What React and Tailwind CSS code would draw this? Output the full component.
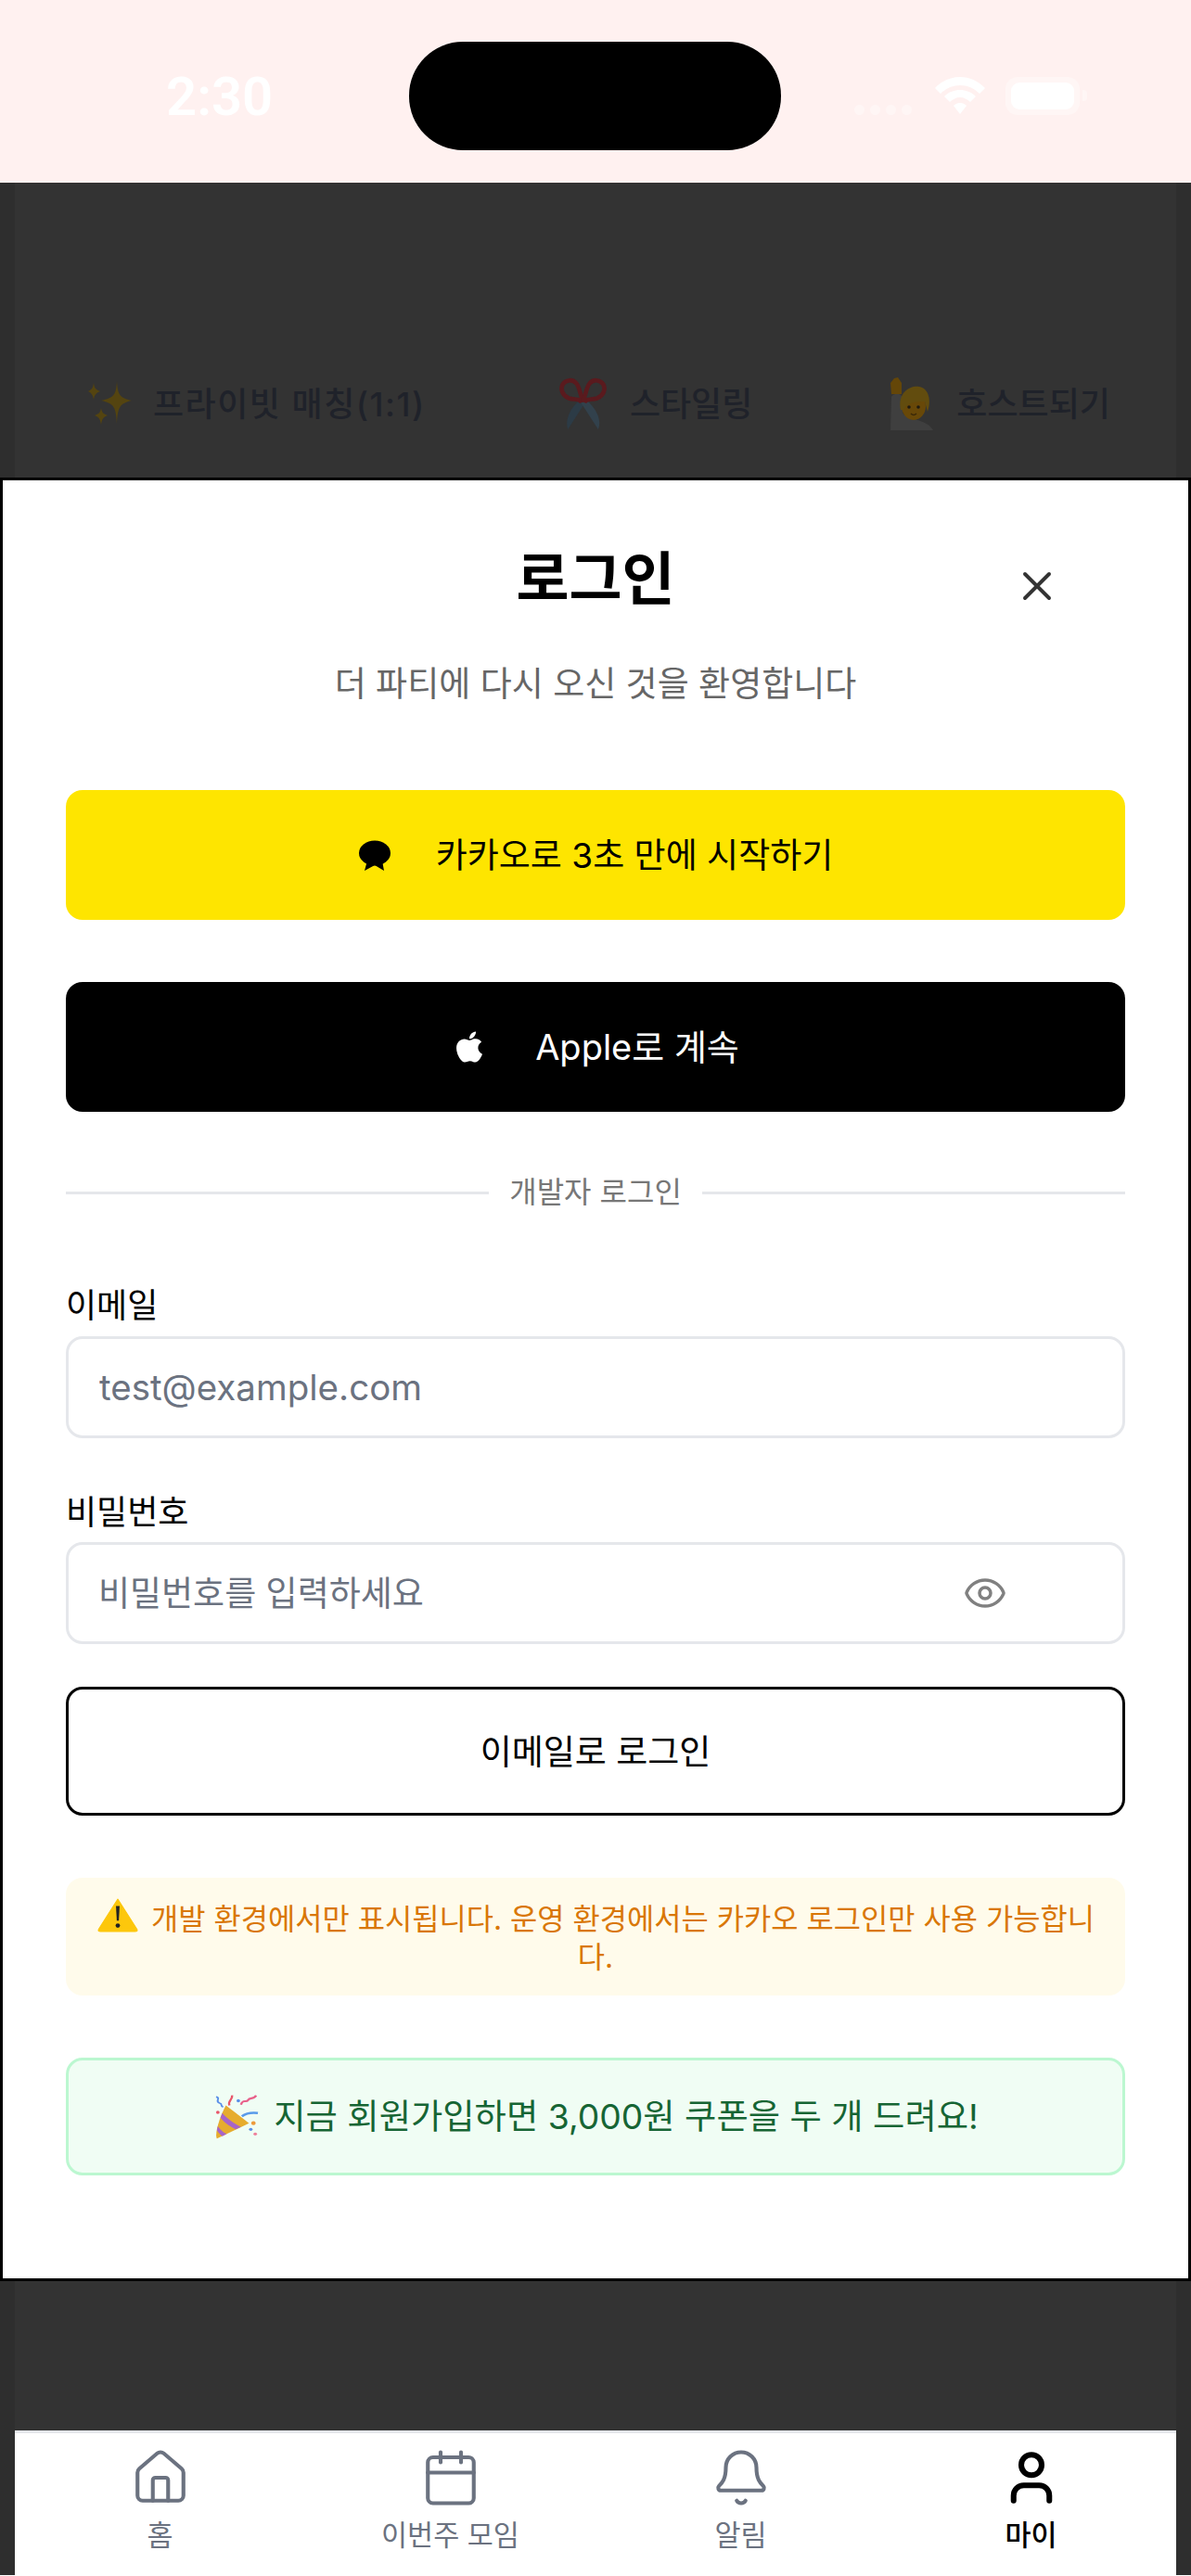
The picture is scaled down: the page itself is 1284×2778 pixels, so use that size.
// App.jsx
import React from 'react';
import { X, Eye, House, Calendar, Bell, User } from 'lucide-react';
import { FaApple } from 'react-icons/fa';

const font = { fontFamily: '"Inter", "Noto Sans CJK KR", sans-serif' };

function Sparkles() {
  return (
    <svg width="48" height="52" viewBox="0 0 48 52" className="shrink-0">
      <g fill="#544410">
        <path d="M31 1 C32 16 34 19 47 22 C34 25 32 29 31 47 C30 29 28 25 14 22 C28 19 30 16 31 1Z" />
        <path d="M6 3 C7 9 8 10 13 12 C8 14 7 16 6 21 C5 16 4 14 0 12 C4 10 5 9 6 3Z" />
        <path d="M14 30 C15 35 16 36 21 38 C16 40 15 42 14 48 C13 42 12 40 7 38 C12 36 13 35 14 30Z" />
      </g>
    </svg>
  );
}

function Scissors() {
  return (
    <svg width="56" height="60" viewBox="0 0 60 62" className="shrink-0">
      <path d="M34 26 L12 60 C8 48 16 34 26 26Z" fill="#2c3b46" />
      <path d="M25 26 L47 60 C52 48 43 34 33 26Z" fill="#32414c" />
      <g fill="none" stroke="#5a1a1e" strokeWidth="5">
        <path d="M28 29 C26 24 20 26 13 24 C6 21 3 14 6 8 C10 2 18 2 22 7 C26 12 26 20 30 28" />
        <path d="M31 29 C33 24 39 26 46 24 C53 21 56 14 53 8 C49 2 41 2 37 7 C33 12 33 20 29 28" />
      </g>
    </svg>
  );
}

function HandUp() {
  return (
    <svg width="50" height="58" viewBox="0 0 50 58" className="shrink-0">
      <path d="M1 57 L2 22 C2 18 10 16 13 20 L14 38 C18 46 40 44 47 57Z" fill="#3f3f3f" />
      <path d="M2 18 L1 6 L5 1 L9 0 L13 6 L13 18Z" fill="#644608" />
      <ellipse cx="26" cy="31" rx="13" ry="15" fill="#684808" />
      <path d="M12 35 C8 15 24 8 32 10 C43 12 45 26 41 37 L38 26 C30 26 20 26 15 35Z" fill="#624c0e" />
      <circle cx="21" cy="32" r="1.800" fill="#1f1a10" />
      <circle cx="31" cy="32" r="1.800" fill="#1f1a10" />
      <path d="M23 39 C25 41 27 41 29 39" fill="none" stroke="#3a2808" strokeWidth="1.500" />
    </svg>
  );
}

function Party() {
  return (
    <svg width="48" height="50" viewBox="0 0 50 60" preserveAspectRatio="none" className="shrink-0">
      <path d="M13 15 L39 38 L3 58 C0 52 6 30 13 15Z" fill="#e6ac2e" />
      <path d="M9 25 C14 32 22 38 30 43 L24 46 C17 42 10 36 7 31Z" fill="#a764c9" />
      <path d="M4 42 C7 47 10 50 14 52 L9 55 C6 52 4 49 3 47Z" fill="#a764c9" />
      <path d="M31 29 C36 25 42 24 49 25" fill="none" stroke="#5a9bea" strokeWidth="3" />
      <path d="M17 15 C15 8 21 8 20 2" fill="none" stroke="#e8566a" strokeWidth="2.5" />
      <path d="M2 4 C8 5 0 10 6 12 C10 13 6 16 10 17" fill="none" stroke="#5a8fe8" strokeWidth="2" />
      <path d="M30 14 C32 6 36 12 38 8 C40 4 44 8 47 2" fill="none" stroke="#e8608a" strokeWidth="2.5" />
      <circle cx="44" cy="38" r="2.5" fill="#ec9a3c" />
      <circle cx="41" cy="46" r="2" fill="#5a8fe8" />
      <circle cx="46" cy="52" r="2" fill="#ee7f9a" />
      <circle cx="4" cy="24" r="2" fill="#e8566a" />
      <circle cx="27" cy="9" r="2" fill="#5a8fe8" />
    </svg>
  );
}

function Warning() {
  return (
    <svg width="46" height="38" viewBox="0 0 42 36" preserveAspectRatio="none" className="shrink-0">
      <path d="M21 2 L40 33 C40.500 34.500 40 35 38 35 L4 35 C2 35 1.500 34.500 2 33Z" fill="#fdc70c" stroke="#fdc70c" strokeLinejoin="round" />
      <path d="M19.200 9 H22.800 L22 24 H20Z" fill="#222" />
      <circle cx="21" cy="29" r="2.200" fill="#222" />
    </svg>
  );
}

function KakaoIcon() {
  return (
    <svg width="36" height="34" viewBox="0 0 36 34" className="shrink-0">
      <ellipse cx="18" cy="14" rx="17" ry="13.500" fill="#000" />
      <path d="M10 22 L7 33 L18 27 L28 33 L26 22Z" fill="#000" />
    </svg>
  );
}

function StatusBar() {
  return (
    <div className="flex items-center h-[197px] bg-[#fff1f0] pt-[9px]">
      <div className="w-[441px] pl-[179px] pt-[2px]">
        <span className="font-['Roboto'] text-[58px] leading-[60px] font-semibold text-white">2:30</span>
      </div>
      <div className="w-[401px] h-[117px] rounded-[58px] bg-black" />
      <div className="flex-1 flex items-center pl-[79px]">
        <div className="flex gap-[6px] pt-[30px]">
          <span className="w-[11px] h-[11px] rounded-full bg-[#fff6f5]" />
          <span className="w-[11px] h-[11px] rounded-full bg-[#fff6f5]" />
          <span className="w-[11px] h-[11px] rounded-full bg-[#fff6f5]" />
          <span className="w-[11px] h-[11px] rounded-full bg-[#fff6f5]" />
        </div>
        <svg width="54" height="41" viewBox="0 0 54 41" className="ml-[25px]">
          <path d="M27 0 C37 0 46 4 54 12 L48 18 C42 12 35 9 27 9 C19 9 12 12 6 18 L0 12 C8 4 17 0 27 0Z" fill="#fff" />
          <path d="M27 14 C33 14 39 16 44 21 L38 27 C35 24 31 22 27 22 C23 22 19 24 16 27 L10 21 C15 16 21 14 27 14Z" fill="#fff" />
          <path d="M27 28 C30 28 32 29 34 31 L27 40 L20 31 C22 29 24 28 27 28Z" fill="#fff" />
        </svg>
        <div className="ml-[22px] w-[80px] h-[41px] rounded-[13px] bg-[#fff6f5] p-[6px]">
          <div className="w-full h-full rounded-[9px] bg-white" />
        </div>
        <div className="ml-[3px] w-[5px] h-[12px] rounded-r bg-[#fff6f5]" />
      </div>
    </div>
  );
}

function Backdrop() {
  const chips = [
    { icon: <Sparkles />, label: '프라이빗 매칭(1:1)', chipClass: '', textClass: 'tracking-[1.5px]' },
    { icon: <Scissors />, label: '스타일링', chipClass: '-ml-[3px] mr-[3px]', textClass: '' },
    { icon: <HandUp />, label: '호스트되기', chipClass: '', textClass: '' },
  ];
  return (
    <div className="px-4 bg-[#2e2e2e]">
      <div className="h-[318px] bg-[#333333] pt-[209px] pl-[79px]">
        <div className="flex items-center gap-[145px]">
          {chips.map((chip) => (
            <div key={chip.label} className={`flex items-center gap-[22px] shrink-0 ${chip.chipClass}`}>
              {chip.icon}
              <span className={`text-[36px] leading-[60px] font-medium text-[#1f222a] whitespace-nowrap ${chip.textClass}`}>{chip.label}</span>
            </div>
          ))}
        </div>
      </div>
    </div>
  );
}

function LoginModal() {
  return (
    <div className="bg-white border-[3px] border-black px-[68px] pt-[77px] pb-[111px]">
      {/* Header */}
      <div className="grid grid-cols-[1fr_auto_1fr] h-[60px]">
        <div />
        <h1 className="text-[62px] leading-[60px] font-bold text-black">로그인</h1>
        <div className="flex justify-end pr-[69px]">
          <X size={52} strokeWidth={1.8} className="text-[#333] mt-[11px]" />
        </div>
      </div>
      <p className="mt-[53px] text-center text-[37px] leading-[60px] text-[#666666]">더 파티에 다시 오신 것을 환영합니다</p>

      {/* Social buttons */}
      <button className="mt-[84px] w-full h-[140px] pt-[2px] rounded-[18px] bg-[#fee500] flex items-center justify-center gap-[48px] text-[37px] text-black">
        <KakaoIcon />
        카카오로 3초 만에 시작하기
      </button>
      <button className="mt-[67px] w-full h-[140px] rounded-[18px] bg-black flex items-center justify-center gap-[52px] text-[38px] text-white">
        <FaApple size={38} />
        Apple로 계속
      </button>

      {/* Divider */}
      <div className="mt-[67px] h-[40px] flex items-center gap-[22px]">
        <div className="flex-1 h-[3px] bg-[#e5e7eb]" />
        <span className="text-[32px] leading-[40px] text-[#777777]">개발자 로그인</span>
        <div className="flex-1 h-[3px] bg-[#e5e7eb]" />
      </div>

      {/* Form */}
      <label className="block mt-[77px] text-[36px] leading-[50px] text-black">이메일</label>
      <input
        placeholder="test@example.com"
        className="block mt-[8px] w-full h-[110px] rounded-[18px] border-[3px] border-[#e5e7eb] px-[33px] text-[38.500px] placeholder:text-[#6b7280] outline-none"
        style={font}
      />
      <label className="block mt-[55px] text-[36px] leading-[50px] text-black">비밀번호</label>
      <div className="mt-[7px] w-full h-[110px] rounded-[18px] border-[3px] border-[#e5e7eb] pl-[32px] pr-[124px] pt-[2px] flex items-center">
        <input
          placeholder="비밀번호를 입력하세요"
          className="flex-1 min-w-0 text-[37px] placeholder:text-[#6b7280] outline-none"
          style={font}
        />
        <Eye size={48} strokeWidth={1.75} className="text-[#808080] shrink-0 -mt-[2px]" />
      </div>
      <button className="mt-[46px] w-full h-[139px] pt-[2px] rounded-[18px] border-[3px] border-black bg-white text-[37px] text-black">
        이메일로 로그인
      </button>

      {/* Notices */}
      <div className="mt-[67px] h-[127px] rounded-[18px] bg-[#fffbeb] px-[30px] flex items-center justify-center">
        <p className="text-[31.800px] leading-[41px] text-center text-[#d97706]">
          <span className="inline-block align-[-3px] mr-[13px]"><Warning /></span>
          개발 환경에서만 표시됩니다. 운영 환경에서는 카카오 로그인만 사용 가능합니다.
        </p>
      </div>
      <div className="mt-[67px] h-[127px] rounded-[18px] bg-[#f0fdf4] border-[3px] border-[#bbf7d0] flex items-center justify-center gap-[16px] pl-[2px]">
        <Party />
        <span className="text-[37.300px] text-[#166534]">지금 회원가입하면 3,000원 쿠폰을 두 개 드려요!</span>
      </div>
    </div>
  );
}

function BottomNav() {
  const tabs = [
    { label: '홈', Icon: House },
    { label: '이번주 모임', Icon: Calendar },
    { label: '알림', Icon: Bell },
    { label: '마이', Icon: User, active: true },
  ];
  return (
    <div className="px-4 bg-[#2e2e2e]">
      <div className="h-[161px] bg-[#333333]" />
      <nav className="h-[156px] bg-white border-t-[3px] border-[#e5e7eb] grid grid-cols-4">
        {tabs.map(({ label, Icon, active }) => (
          <div key={label} className={active ? 'flex flex-col items-center pt-[15px] text-black' : 'flex flex-col items-center pt-[15px] text-[#6b7280]'}>
            <Icon size={66} strokeWidth={active ? 2.2 : 1.5} />
            <span className={active ? 'mt-[9px] text-[30.500px] leading-[40px] font-medium' : 'mt-[9px] text-[30.500px] leading-[40px]'}>{label}</span>
          </div>
        ))}
      </nav>
    </div>
  );
}

export default function App() {
  return (
    <div className="w-[1284px] h-[2778px] overflow-hidden" style={font}>
      <StatusBar />
      <Backdrop />
      <LoginModal />
      <BottomNav />
    </div>
  );
}
